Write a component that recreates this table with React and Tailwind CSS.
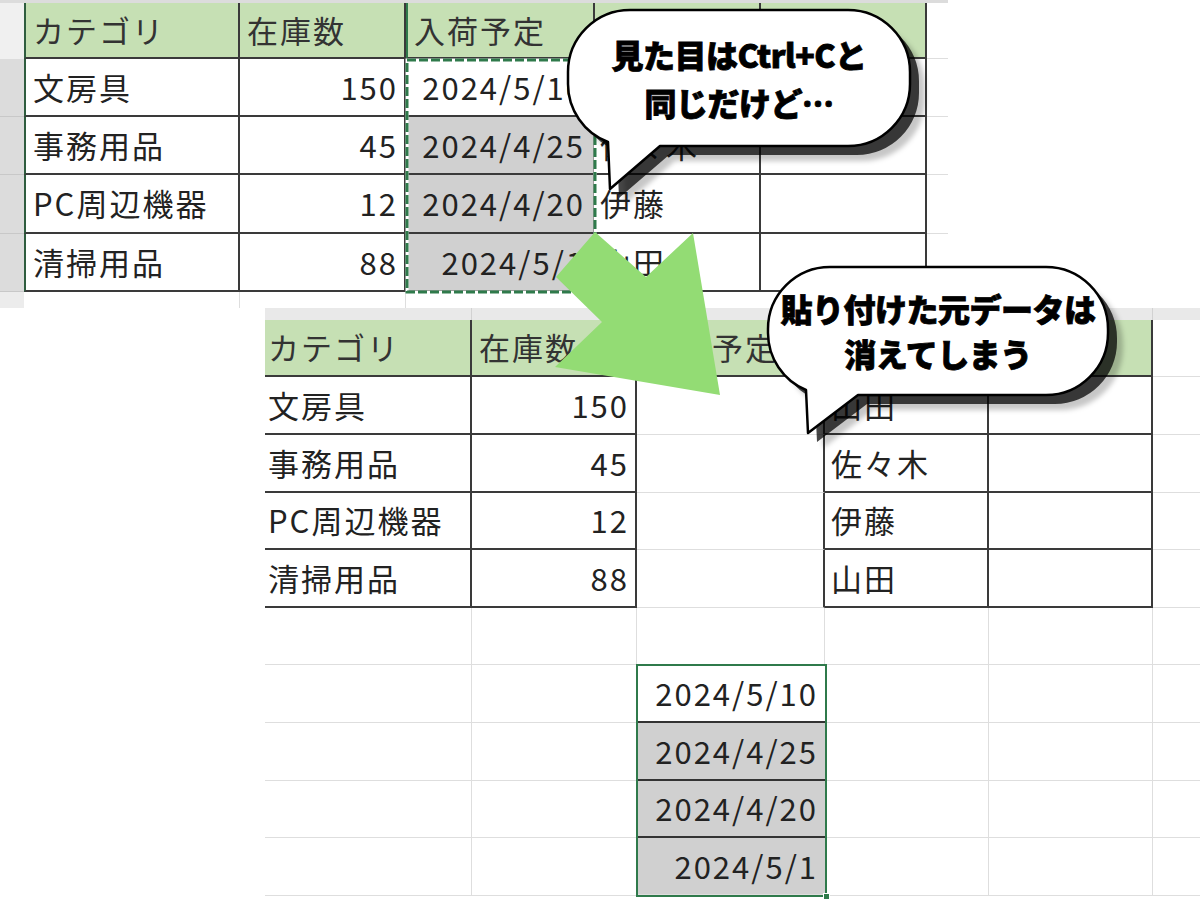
import React from "react";

const topRows = [
  { h: "h-[58px]", cells: ["文房具", "150", "2024/5/10", "山田"], sel: false },
  { h: "h-[58px]", cells: ["事務用品", "45", "2024/4/25", "佐々木"], sel: true },
  { h: "h-[59px]", cells: ["PC周辺機器", "12", "2024/4/20", "伊藤"], sel: true },
  { h: "h-[58px]", cells: ["清掃用品", "88", "2024/5/1", "山田"], sel: true },
];

const lowRows = [
  { h: "h-[58px]", cells: ["文房具", "150", "山田"] },
  { h: "h-[58px]", cells: ["事務用品", "45", "佐々木"] },
  { h: "h-[57px]", cells: ["PC周辺機器", "12", "伊藤"] },
  { h: "h-[58px]", cells: ["清掃用品", "88", "山田"] },
];

const pasted = [
  { h: "h-[58px]", d: "2024/5/10", gray: false },
  { h: "h-[58px]", d: "2024/4/25", gray: true },
  { h: "h-[57px]", d: "2024/4/20", gray: true },
  { h: "h-[58px]", d: "2024/5/1", gray: true },
];

const line = "border-[#3a3a3a]";
const faint = "border-[#dedede]";

function TopSheet() {
  return (
    <div className="relative w-[948px] h-[308px] text-[31px] tracking-[2px] text-[#222]">
      {/* header row */}
      <div className="flex h-[59px] border-t-[3px] border-[#dcdcdc]">
        <div className="w-[24px] bg-[#f0f0f0]" />
        <div className="w-[216px] bg-[#c6e0b4] border-l-2 border-r-2 border-b-2 border-[#3a3a3a] border-l-[#2f5d3f] flex items-center pl-[7px] text-[#333]">カテゴリ</div>
        <div className="w-[166px] bg-[#c6e0b4] border-r-2 border-b-2 border-[#3a3a3a] flex items-center pl-[7px] text-[#333]">在庫数</div>
        <div className="w-[189px] bg-[#c6e0b4] border-l-2 border-[#2f7a4b] border-b-2 border-b-[#3a3a3a] border-r-2 border-r-[#3a3a3a] flex items-center pl-[6px] text-[#333]">入荷予定</div>
        <div className="w-[166px] bg-[#c6e0b4] border-r-2 border-b-2 border-[#3a3a3a] flex items-center pl-[6px] text-[#333]">担当者</div>
        <div className="w-[166px] bg-[#c6e0b4] border-r-2 border-b-2 border-[#3a3a3a]" />
        <div className="w-[21px] border-b border-[#dedede]" />
      </div>
      {topRows.map((r, i) => (
        <div key={i} className={`flex ${r.h}`}>
          <div className="w-[24px] bg-[#dcdcdc] border-b border-[#c8c8c8]" />
          <div className={`w-[216px] border-l-2 border-r-2 border-b-2 ${line} border-l-[#2f5d3f] flex items-center pl-[7px]`}>{r.cells[0]}</div>
          <div className={`w-[166px] border-r-2 border-b-2 ${line} flex items-center justify-end pr-[6px]`}>{r.cells[1]}</div>
          <div className={`w-[189px] border-r-2 border-b-2 ${line} flex items-center justify-end pr-[8px] ${r.sel ? "bg-[#d0d0d0]" : "bg-white"}`}>{r.cells[2]}</div>
          <div className={`w-[166px] border-r-2 border-b-2 ${line} flex items-center pl-[5px]`}>{r.cells[3]}</div>
          <div className={`w-[166px] border-r-2 border-b-2 ${line}`} />
          <div className={`w-[21px] border-b ${faint}`} />
        </div>
      ))}
      <div className="flex h-[16px]">
        <div className="w-[24px] bg-[#ececec]" />
        <div className={`w-[216px] border-r ${faint}`} />
        <div className={`w-[166px] border-r ${faint}`} />
        <div className={`w-[189px] border-r ${faint}`} />
      </div>
      {/* copy marquee */}
      <svg className="absolute left-[405px] top-[58px]" width="192" height="236">
        <rect x="2" y="2" width="188" height="232" fill="none" stroke="#ffffff" strokeWidth="3" />
        <rect x="2" y="2" width="188" height="232" fill="none" stroke="#2f7a4b" strokeWidth="3" strokeDasharray="9 3" />
      </svg>
    </div>
  );
}

function LowSheet() {
  return (
    <div className="relative ml-[265px] w-[935px] h-[592px] text-[31px] tracking-[2px] text-[#222]">
      <div className="flex h-[12px] bg-[#e9e9e9]">
        <div className="w-[207px] border-r border-[#d2d2d2]" />
        <div className="w-[165px] border-r border-[#d2d2d2]" />
        <div className="w-[188px] border-r border-[#d2d2d2]" />
        <div className="w-[164px] border-r border-[#d2d2d2]" />
        <div className="w-[164px] border-r border-[#d2d2d2]" />
      </div>
      <div className="flex h-[57px] text-[#333]">
        <div className={`w-[207px] bg-[#c6e0b4] border-r-2 border-b-2 ${line} flex items-center pl-[3px]`}>カテゴリ</div>
        <div className={`w-[165px] bg-[#c6e0b4] border-r-2 border-b-2 ${line} flex items-center pl-[7px]`}>在庫数</div>
        <div className={`w-[188px] bg-[#c6e0b4] border-r-2 border-b-2 ${line} flex items-center pl-[9px]`}>入荷予定</div>
        <div className={`w-[164px] bg-[#c6e0b4] border-r-2 border-b-2 ${line} flex items-center pl-[6px]`}>担当者</div>
        <div className={`w-[164px] bg-[#c6e0b4] border-r-2 border-b-2 ${line}`} />
        <div className={`w-[47px] border-b ${faint}`} />
      </div>
      {lowRows.map((r, i) => (
        <div key={i} className={`flex ${r.h}`}>
          <div className={`w-[207px] border-r-2 border-b-2 ${line} flex items-center pl-[3px]`}>{r.cells[0]}</div>
          <div className={`w-[165px] border-r-2 border-b-2 ${line} flex items-center justify-end pr-[6px]`}>{r.cells[1]}</div>
          <div className={`w-[188px] border-r-2 border-b border-r-[#3a3a3a] border-b-[#dedede]`} />
          <div className={`w-[164px] border-r-2 border-b-2 ${line} flex items-center pl-[6px]`}>{r.cells[2]}</div>
          <div className={`w-[164px] border-r-2 border-b-2 ${line}`} />
          <div className={`w-[47px] border-b ${faint}`} />
        </div>
      ))}
      <div className="flex h-[57px]">
        <div className={`w-[207px] border-r border-b ${faint}`} />
        <div className={`w-[165px] border-r border-b ${faint}`} />
        <div className={`w-[188px] border-r border-b ${faint}`} />
        <div className={`w-[164px] border-r border-b ${faint}`} />
        <div className={`w-[164px] border-r border-b ${faint}`} />
        <div className={`w-[47px] border-b ${faint}`} />
      </div>
      {pasted.map((r, i) => (
        <div key={i} className={`flex ${r.h}`}>
          <div className={`w-[207px] border-r border-b ${faint}`} />
          <div className={`w-[165px] border-r border-b ${faint}`} />
          <div className={`w-[188px] border-b-2 ${i < 3 ? "border-[#333]" : "border-[#dedede]"} flex items-center justify-end pr-[7px] ${r.gray ? "bg-[#d0d0d0]" : "bg-white"}`}>{r.d}</div>
          <div className={`w-[164px] border-r border-b ${faint}`} />
          <div className={`w-[164px] border-r border-b ${faint}`} />
          <div className={`w-[47px] border-b ${faint}`} />
        </div>
      ))}
      {/* paste selection */}
      <div className="absolute left-[371px] top-[356px] w-[191px] h-[233px] border-2 border-[#2f7a4b]">
        <div className="absolute -right-[5px] -bottom-[5px] w-[7px] h-[7px] bg-[#2f7a4b] border border-white" />
      </div>
    </div>
  );
}

function Arrow() {
  return (
    <svg className="absolute left-[550px] top-[228px]" width="176" height="172">
      <polygon points="45,4 96,49 143,5 170,167 5,139 52,94 6,49" fill="#93dc74" />
    </svg>
  );
}

function Bubble({ className, w, h, d, box, children }) {
  return (
    <div className={`absolute ${className}`}>
      <svg width={w} height={h}>
        <defs>
          <filter id="soft" x="-10%" y="-10%" width="130%" height="130%">
            <feGaussianBlur stdDeviation="2.5" />
          </filter>
        </defs>
        <path d={d} transform="translate(15 15)" fill="#000000" fillOpacity="0.22" filter="url(#soft)" />
        <path d={d} transform="translate(9 9)" fill="#000000" fillOpacity="0.72" />
        <path d={d} fill="#ffffff" stroke="#000000" strokeWidth="2.5" strokeLinejoin="round" />
      </svg>
      <div className={`absolute flex flex-col items-center justify-center font-black text-[32px] text-black tracking-[-0.5px] [-webkit-text-stroke:0.8px_#000] ${box}`}>
        {children}
      </div>
    </div>
  );
}

export default function App() {
  return (
    <div className="relative w-[1200px] h-[900px] overflow-hidden bg-white font-['Noto_Sans_CJK_JP',sans-serif]">
      <TopSheet />
      <LowSheet />
      <Arrow />
      <Bubble
        className="left-[560px] top-[2px]"
        w={385}
        h={205}
        d="M 70 8 H 288 A 62 62 0 0 1 350 70 V 82 A 62 62 0 0 1 288 144 H 100 L 50 187 L 48 140 A 62 62 0 0 1 8 82 V 70 A 62 62 0 0 1 70 8 Z"
        box="left-[8px] top-[8px] w-[342px] h-[136px] leading-[48px]"
      >
        <span>見た目はCtrl+Cと</span>
        <span>同じだけど…</span>
      </Bubble>
      <Bubble
        className="left-[760px] top-[259px]"
        w={385}
        h={195}
        d="M 70 8 H 286 A 62 62 0 0 1 348 70 V 74 A 62 62 0 0 1 286 136 H 98 L 48 174 L 46 131 A 62 62 0 0 1 8 74 V 70 A 62 62 0 0 1 70 8 Z"
        box="left-[8px] top-[8px] w-[340px] h-[128px] leading-[45px]"
      >
        <span>貼り付けた元データは</span>
        <span>消えてしまう</span>
      </Bubble>
    </div>
  );
}
